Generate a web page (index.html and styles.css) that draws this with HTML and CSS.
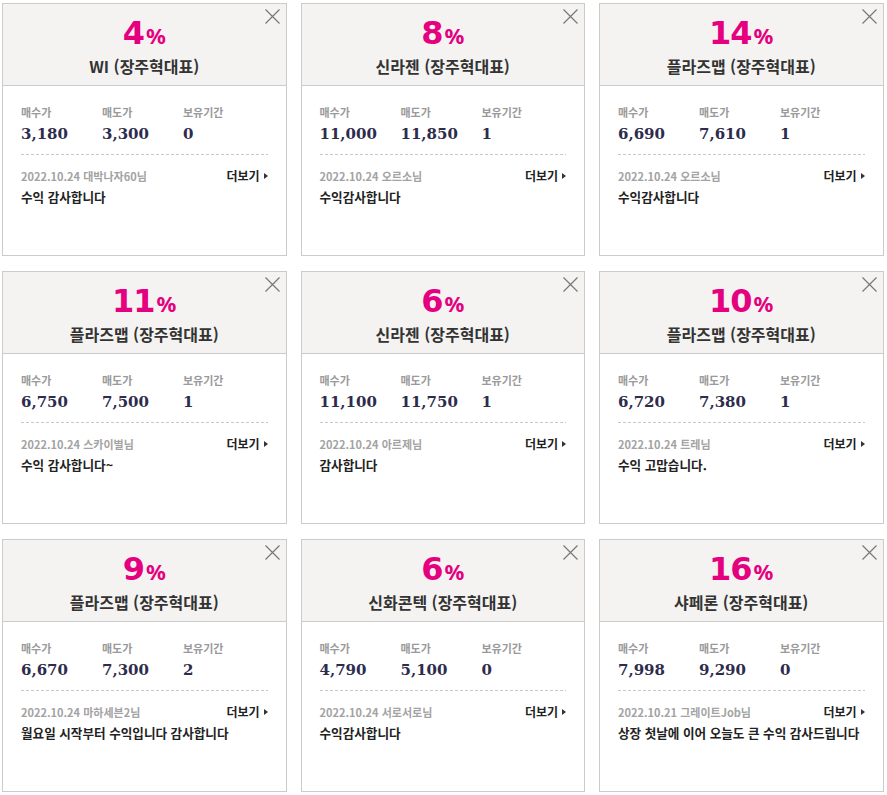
FILE: index.html
```html
<!DOCTYPE html>
<html lang="ko">
<head>
<meta charset="utf-8">
<title>수익 후기</title>
<link rel="stylesheet" href="styles.css">
</head>
<body>
<div class="grid">

  <div class="card">
    <div class="head">
      <button class="close" aria-label="닫기"><svg viewBox="0 0 15 15" width="15" height="15"><path d="M0.5 0.5L14.5 14.5M14.5 0.5L0.5 14.5"/></svg></button>
      <div class="rate">4<span class="pct">%</span></div>
      <div class="name">WI (장주혁대표)</div>
    </div>
    <div class="body">
      <div class="stats">
        <div class="stat"><div class="lbl">매수가</div><div class="val">3,180</div></div>
        <div class="stat"><div class="lbl">매도가</div><div class="val">3,300</div></div>
        <div class="stat"><div class="lbl">보유기간</div><div class="val">0</div></div>
      </div>
      <div class="foot">
        <div class="meta"><span class="date">2022.10.24 대박나자60님</span><a class="more">더보기<i class="tri"></i></a></div>
        <p class="msg">수익 감사합니다</p>
      </div>
    </div>
  </div>

  <div class="card">
    <div class="head">
      <button class="close" aria-label="닫기"><svg viewBox="0 0 15 15" width="15" height="15"><path d="M0.5 0.5L14.5 14.5M14.5 0.5L0.5 14.5"/></svg></button>
      <div class="rate">8<span class="pct">%</span></div>
      <div class="name">신라젠 (장주혁대표)</div>
    </div>
    <div class="body">
      <div class="stats">
        <div class="stat"><div class="lbl">매수가</div><div class="val">11,000</div></div>
        <div class="stat"><div class="lbl">매도가</div><div class="val">11,850</div></div>
        <div class="stat"><div class="lbl">보유기간</div><div class="val">1</div></div>
      </div>
      <div class="foot">
        <div class="meta"><span class="date">2022.10.24 오르소님</span><a class="more">더보기<i class="tri"></i></a></div>
        <p class="msg">수익감사합니다</p>
      </div>
    </div>
  </div>

  <div class="card">
    <div class="head">
      <button class="close" aria-label="닫기"><svg viewBox="0 0 15 15" width="15" height="15"><path d="M0.5 0.5L14.5 14.5M14.5 0.5L0.5 14.5"/></svg></button>
      <div class="rate">14<span class="pct">%</span></div>
      <div class="name">플라즈맵 (장주혁대표)</div>
    </div>
    <div class="body">
      <div class="stats">
        <div class="stat"><div class="lbl">매수가</div><div class="val">6,690</div></div>
        <div class="stat"><div class="lbl">매도가</div><div class="val">7,610</div></div>
        <div class="stat"><div class="lbl">보유기간</div><div class="val">1</div></div>
      </div>
      <div class="foot">
        <div class="meta"><span class="date">2022.10.24 오르소님</span><a class="more">더보기<i class="tri"></i></a></div>
        <p class="msg">수익감사합니다</p>
      </div>
    </div>
  </div>

  <div class="card">
    <div class="head">
      <button class="close" aria-label="닫기"><svg viewBox="0 0 15 15" width="15" height="15"><path d="M0.5 0.5L14.5 14.5M14.5 0.5L0.5 14.5"/></svg></button>
      <div class="rate">11<span class="pct">%</span></div>
      <div class="name">플라즈맵 (장주혁대표)</div>
    </div>
    <div class="body">
      <div class="stats">
        <div class="stat"><div class="lbl">매수가</div><div class="val">6,750</div></div>
        <div class="stat"><div class="lbl">매도가</div><div class="val">7,500</div></div>
        <div class="stat"><div class="lbl">보유기간</div><div class="val">1</div></div>
      </div>
      <div class="foot">
        <div class="meta"><span class="date">2022.10.24 스카이별님</span><a class="more">더보기<i class="tri"></i></a></div>
        <p class="msg">수익 감사합니다~</p>
      </div>
    </div>
  </div>

  <div class="card">
    <div class="head">
      <button class="close" aria-label="닫기"><svg viewBox="0 0 15 15" width="15" height="15"><path d="M0.5 0.5L14.5 14.5M14.5 0.5L0.5 14.5"/></svg></button>
      <div class="rate">6<span class="pct">%</span></div>
      <div class="name">신라젠 (장주혁대표)</div>
    </div>
    <div class="body">
      <div class="stats">
        <div class="stat"><div class="lbl">매수가</div><div class="val">11,100</div></div>
        <div class="stat"><div class="lbl">매도가</div><div class="val">11,750</div></div>
        <div class="stat"><div class="lbl">보유기간</div><div class="val">1</div></div>
      </div>
      <div class="foot">
        <div class="meta"><span class="date">2022.10.24 아르제님</span><a class="more">더보기<i class="tri"></i></a></div>
        <p class="msg">감사합니다</p>
      </div>
    </div>
  </div>

  <div class="card">
    <div class="head">
      <button class="close" aria-label="닫기"><svg viewBox="0 0 15 15" width="15" height="15"><path d="M0.5 0.5L14.5 14.5M14.5 0.5L0.5 14.5"/></svg></button>
      <div class="rate">10<span class="pct">%</span></div>
      <div class="name">플라즈맵 (장주혁대표)</div>
    </div>
    <div class="body">
      <div class="stats">
        <div class="stat"><div class="lbl">매수가</div><div class="val">6,720</div></div>
        <div class="stat"><div class="lbl">매도가</div><div class="val">7,380</div></div>
        <div class="stat"><div class="lbl">보유기간</div><div class="val">1</div></div>
      </div>
      <div class="foot">
        <div class="meta"><span class="date">2022.10.24 트레님</span><a class="more">더보기<i class="tri"></i></a></div>
        <p class="msg">수익 고맙습니다.</p>
      </div>
    </div>
  </div>

  <div class="card">
    <div class="head">
      <button class="close" aria-label="닫기"><svg viewBox="0 0 15 15" width="15" height="15"><path d="M0.5 0.5L14.5 14.5M14.5 0.5L0.5 14.5"/></svg></button>
      <div class="rate">9<span class="pct">%</span></div>
      <div class="name">플라즈맵 (장주혁대표)</div>
    </div>
    <div class="body">
      <div class="stats">
        <div class="stat"><div class="lbl">매수가</div><div class="val">6,670</div></div>
        <div class="stat"><div class="lbl">매도가</div><div class="val">7,300</div></div>
        <div class="stat"><div class="lbl">보유기간</div><div class="val">2</div></div>
      </div>
      <div class="foot">
        <div class="meta"><span class="date">2022.10.24 마하세븐2님</span><a class="more">더보기<i class="tri"></i></a></div>
        <p class="msg">월요일 시작부터 수익입니다 감사합니다</p>
      </div>
    </div>
  </div>

  <div class="card">
    <div class="head">
      <button class="close" aria-label="닫기"><svg viewBox="0 0 15 15" width="15" height="15"><path d="M0.5 0.5L14.5 14.5M14.5 0.5L0.5 14.5"/></svg></button>
      <div class="rate">6<span class="pct">%</span></div>
      <div class="name">신화콘텍 (장주혁대표)</div>
    </div>
    <div class="body">
      <div class="stats">
        <div class="stat"><div class="lbl">매수가</div><div class="val">4,790</div></div>
        <div class="stat"><div class="lbl">매도가</div><div class="val">5,100</div></div>
        <div class="stat"><div class="lbl">보유기간</div><div class="val">0</div></div>
      </div>
      <div class="foot">
        <div class="meta"><span class="date">2022.10.24 서로서로님</span><a class="more">더보기<i class="tri"></i></a></div>
        <p class="msg">수익감사합니다</p>
      </div>
    </div>
  </div>

  <div class="card">
    <div class="head">
      <button class="close" aria-label="닫기"><svg viewBox="0 0 15 15" width="15" height="15"><path d="M0.5 0.5L14.5 14.5M14.5 0.5L0.5 14.5"/></svg></button>
      <div class="rate">16<span class="pct">%</span></div>
      <div class="name">샤페론 (장주혁대표)</div>
    </div>
    <div class="body">
      <div class="stats">
        <div class="stat"><div class="lbl">매수가</div><div class="val">7,998</div></div>
        <div class="stat"><div class="lbl">매도가</div><div class="val">9,290</div></div>
        <div class="stat"><div class="lbl">보유기간</div><div class="val">0</div></div>
      </div>
      <div class="foot">
        <div class="meta"><span class="date">2022.10.21 그레이트Job님</span><a class="more">더보기<i class="tri"></i></a></div>
        <p class="msg">상장 첫날에 이어 오늘도 큰 수익 감사드립니다</p>
      </div>
    </div>
  </div>

</div>
</body>
</html>
```

FILE: styles.css
```css
* { box-sizing: border-box; }
html, body { margin: 0; padding: 0; background: #fff; }
body {
  font-family: "Noto Sans CJK KR", "Noto Sans", sans-serif;
  color: #222;
}
.grid {
  display: grid;
  grid-template-columns: repeat(3, 284.5px);
  grid-auto-rows: 253px;
  column-gap: 14px;
  row-gap: 15px;
  padding: 3px 0 0 2px;
}
.card {
  border: 1px solid #cbcbcb;
  background: #fff;
  display: flex;
  flex-direction: column;
}
.head {
  position: relative;
  height: 82px;
  background: #f4f3f2;
  border-bottom: 1px solid #cbcbcb;
  padding-top: 11px;
  text-align: center;
}
.close {
  position: absolute;
  top: 5px;
  right: 6px;
  width: 15px;
  height: 15px;
  padding: 0;
  border: 0;
  background: none;
  display: block;
}
.close svg { display: block; }
.close path { stroke: #777; stroke-width: 1.2; fill: none; }
.rate {
  font-family: "DejaVu Sans", sans-serif;
  font-weight: bold;
  font-size: 32px;
  line-height: 36px;
  color: #e4007f;
  letter-spacing: -1px;
}
.pct {
  font-family: "Noto Sans", sans-serif;
  font-size: 22px;
  font-weight: bold;
  margin-left: 2px;
  letter-spacing: 0;
}
.name {
  margin-top: 1px;
  font-size: 16px;
  line-height: 24px;
  font-weight: bold;
  color: #333;
}
.body {
  padding: 19px 18px 0 18px;
}
.stats {
  display: grid;
  grid-template-columns: 81px 81px 1fr;
}
.lbl {
  font-size: 11px;
  line-height: 14px;
  font-weight: bold;
  color: #9a9a9a;
}
.val {
  margin-top: 6px;
  font-family: "DejaVu Serif", serif;
  font-weight: bold;
  font-size: 15px;
  line-height: 18px;
  color: #2d2c4c;
}
.foot {
  margin-top: 11px;
  padding-top: 15px;
  background-image: repeating-linear-gradient(to right, #c8c8c8 0 3px, transparent 3px 5px);
  background-size: 100% 1px;
  background-repeat: no-repeat;
  background-position: top left;
}
.meta {
  display: flex;
  justify-content: space-between;
  align-items: center;
  line-height: 14px;
}
.date {
  font-size: 11px;
  font-weight: bold;
  color: #a3a3a3;
}
.more {
  display: flex;
  align-items: center;
  font-size: 12px;
  font-weight: bold;
  color: #222;
  margin-top: -1px;
}
.tri {
  display: block;
  width: 0;
  height: 0;
  margin-left: 4px;
  border-top: 3px solid transparent;
  border-bottom: 3px solid transparent;
  border-left: 4px solid #333;
}
.msg {
  margin: 6px 0 0;
  font-size: 12.6px;
  line-height: 16px;
  font-weight: bold;
  color: #222;
}
```
